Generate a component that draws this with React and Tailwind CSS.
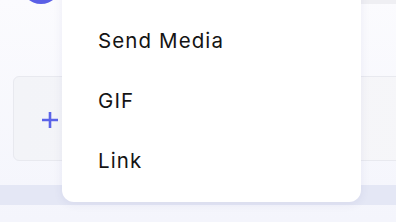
export default function App() {
  const items = ["Send Media", "GIF", "Link"];

  return (
    <div className="relative w-[396px] h-[222px] overflow-hidden bg-gradient-to-b from-[#fbfbfe] to-[#f4f5fc] font-['Inter',sans-serif]">
      {/* Page behind the menu */}
      <div className="flex flex-col">
        <div className="flex justify-between">
          <div className="ml-[21px] -mt-[36px] w-10 h-10 rounded-full bg-[#5a5fe6]" />
          <div className="-mt-1 w-[41px] h-[8px] rounded-bl-[6px] bg-[#efeff3]" />
        </div>
        <div className="ml-[13px] mt-[72px] w-[420px] h-[85px] rounded-l-[6px] border border-[#e8e9ef] bg-gradient-to-r from-[#f3f4f8] to-[#f6f6f9] flex items-center pl-[27px]">
          <svg width="18" height="18" viewBox="0 0 18 18" className="mt-[2px]">
            <path d="M9 1v16M1 9h16" stroke="#5b63e8" strokeWidth="2.6" strokeLinecap="butt" />
          </svg>
        </div>
        <div className="mt-[24px] h-[20px] bg-[#e4e7f5]" />
      </div>

      {/* Attach menu */}
      <div className="absolute left-[62px] -top-[20px] w-[299px] h-[222px] rounded-[12px] bg-white shadow-[0_2px_10px_rgba(60,70,140,0.08)] flex flex-col pt-[31px]">
        {items.map((item) => (
          <div key={item} className="h-[60px] flex items-center pl-[36px] text-[20.5px] tracking-[1.1px] text-[#141414]">
            {item}
          </div>
        ))}
      </div>
    </div>
  );
}
